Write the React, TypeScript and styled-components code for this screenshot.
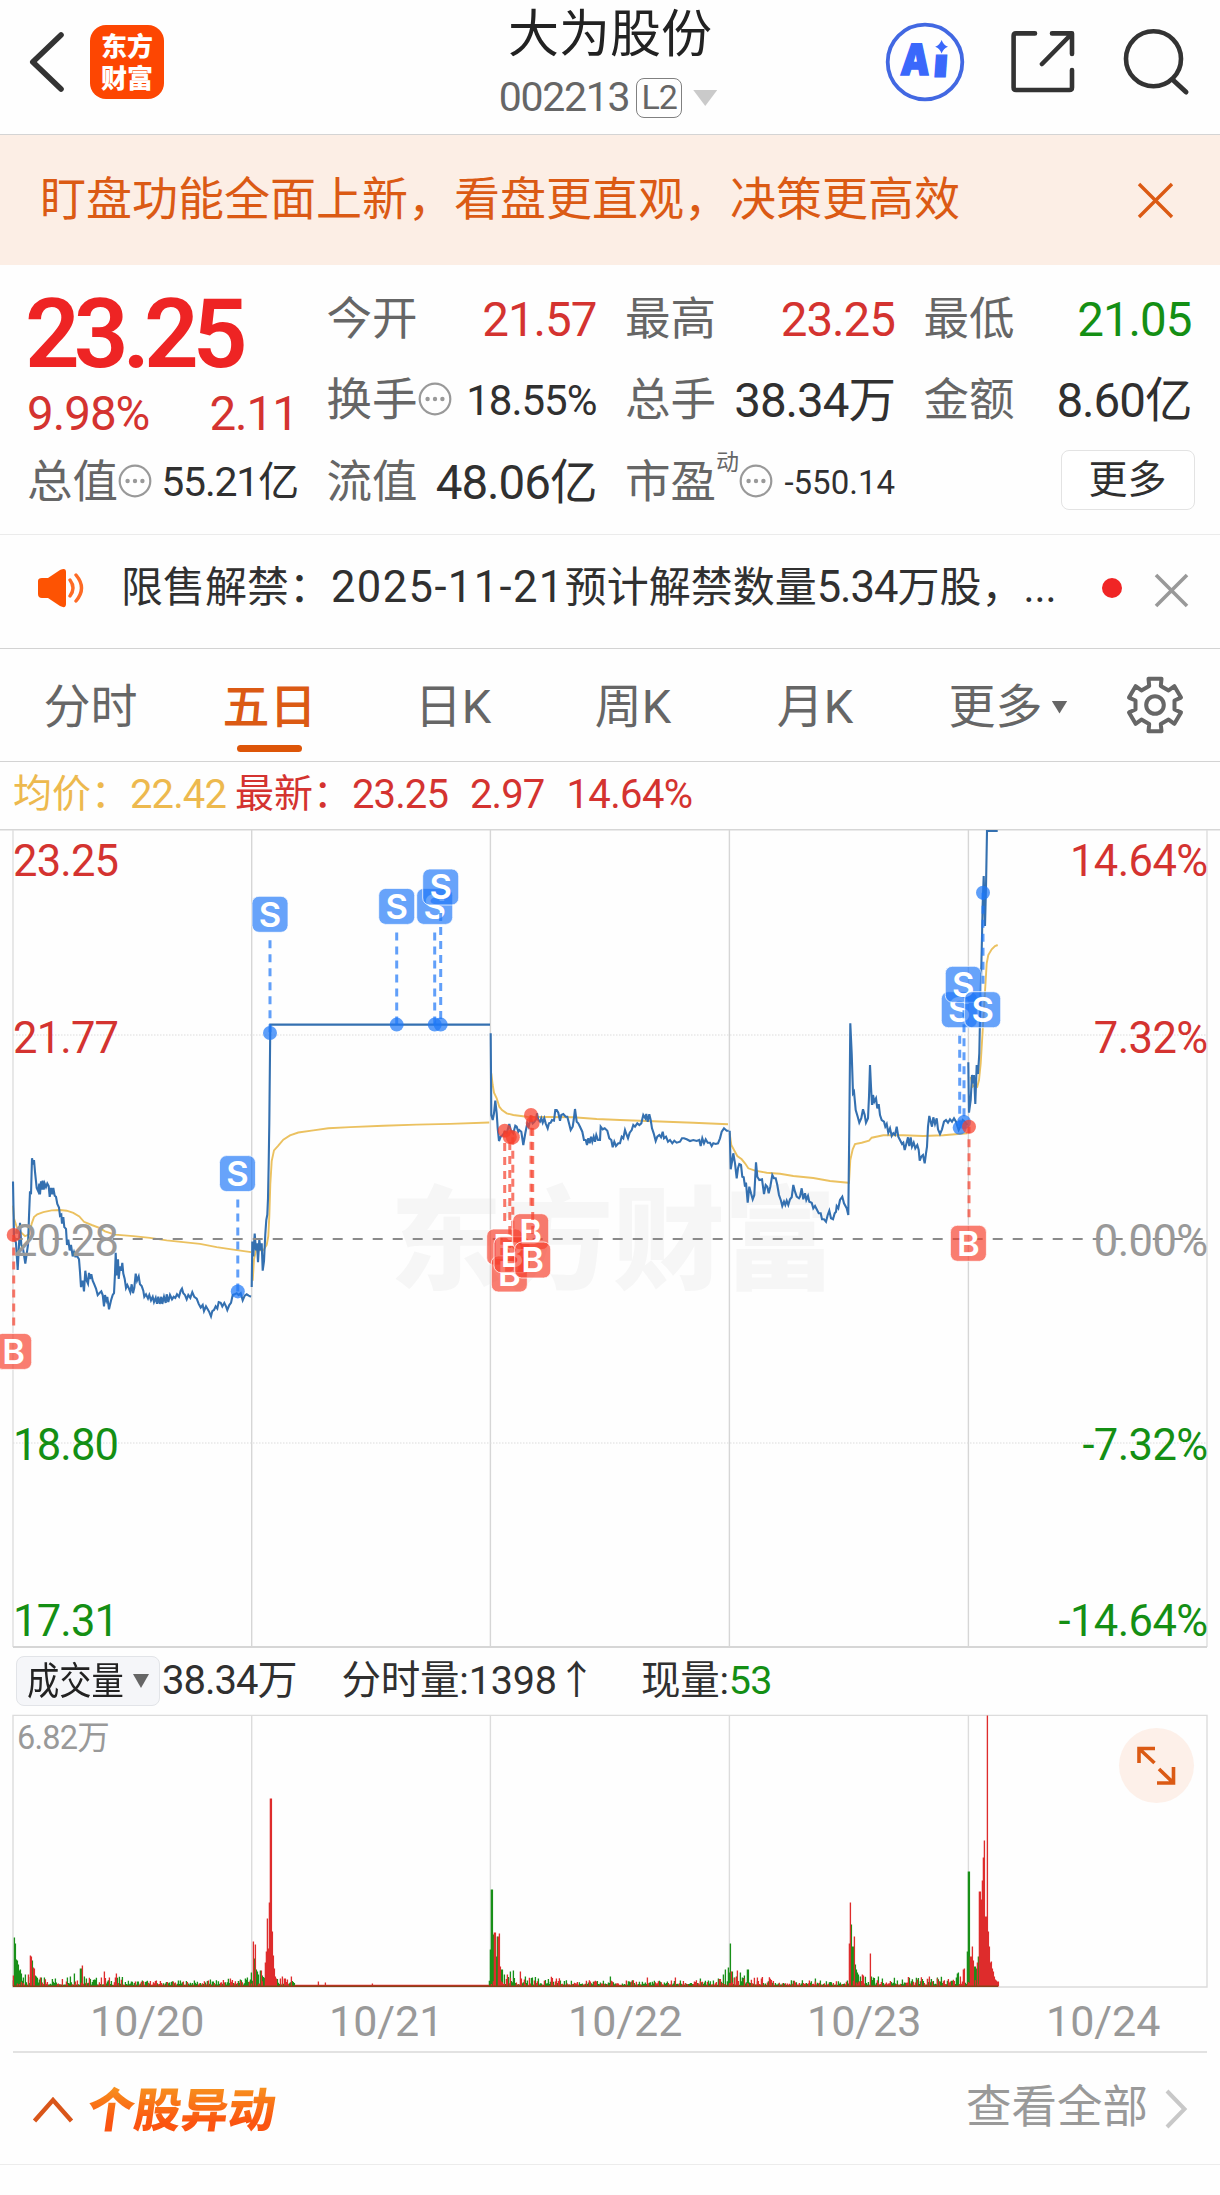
import React from "react";
import styled, { createGlobalStyle } from "styled-components";

const SANS = `Roboto, "Noto Sans CJK SC", sans-serif`;
const RED = "#d43330";
const GREEN = "#148f14";
const INK = "#303030";
const GREY = "#666666";
const PALE = "#999999";
const ORANGE = "#db5a14";

const GlobalStyle = createGlobalStyle`
  * { box-sizing: border-box; }
  body { margin: 0; background: #fff; font-family: ${SANS}; color: ${INK}; }
`;

const Page = styled.main`
  width: 1220px;
  height: 2195px;
  display: flex;
  flex-direction: column;
  background: #fefefe;
  overflow: hidden;
  white-space: nowrap;
  line-height: 1.2;
`;

const Num = styled.span<{ $size?: number; $color?: string; $ls?: number; $weight?: number }>`
  font-size: ${(p) => p.$size ?? 47.5}px;
  color: ${(p) => p.$color ?? INK};
  letter-spacing: ${(p) => p.$ls ?? -1}px;
  font-weight: ${(p) => p.$weight ?? 400};
`;

/* ---------- header ---------- */

const Header = styled.header`
  height: 135px;
  flex: none;
  display: grid;
  grid-template-columns: 420px 380px 420px;
  border-bottom: 1px solid #d4d4d4;
`;

const HeaderLeft = styled.div`
  display: flex;
  align-items: flex-start;
  gap: 24px;
  padding: 25px 0 0 28px;
  svg { margin-top: 6px; }
`;

const Logo = styled.div`
  width: 74px;
  height: 74px;
  border-radius: 16px;
  background: #fd4602;
  color: #fff;
  font: 900 26px/32px "Noto Sans CJK SC", sans-serif;
  text-align: center;
  padding-top: 4px;
`;

const HeaderTitle = styled.div`
  display: flex;
  flex-direction: column;
  align-items: center;
`;

const StockName = styled.h1`
  margin: 0;
  font-size: 51px;
  line-height: 70px;
  font-weight: 400;
  color: #222;
`;

const StockCode = styled.div`
  display: flex;
  align-items: center;
  height: 56px;
  margin-right: 4px;
`;

const LevelBadge = styled.span`
  width: 46px;
  height: 40px;
  margin: 0 11px 0 7px;
  border: 1.5px solid #808080;
  border-radius: 8px;
  color: ${GREY};
  font-size: 34px;
  line-height: 37px;
  letter-spacing: -1px;
  text-align: center;
`;

const Triangle = styled.i<{ $w: number; $h: number; $color: string }>`
  width: ${(p) => p.$w}px;
  height: ${(p) => p.$h}px;
  background: ${(p) => p.$color};
  clip-path: polygon(0 0, 100% 0, 50% 100%);
`;

const HeaderRight = styled.div`
  display: flex;
  align-items: flex-start;
  padding: 20px 0 0 83px;
`;

/* ---------- banner ---------- */

const Banner = styled.section`
  height: 130px;
  flex: none;
  display: flex;
  align-items: center;
  justify-content: space-between;
  padding: 0 46px 0 40px;
  background: #fceee5;
  color: ${ORANGE};
  font-size: 46px;
`;

/* ---------- quote ---------- */

const Quote = styled.section`
  height: 270px;
  flex: none;
  display: grid;
  grid-template-columns: 271px 270px 270px 268px;
  grid-template-rows: 81px 81px 82px;
  column-gap: 28.5px;
  padding: 15px 0 0 27px;
  border-bottom: 1.5px solid #ebebeb;
`;

const PriceCell = styled.div`
  grid-row: 1 / span 2;
  display: flex;
  flex-direction: column;
`;

const Price = styled.div`
  height: 106px;
  line-height: 108px;
  margin-left: -2px;
  font-size: 96px;
  font-weight: 600;
  letter-spacing: -6px;
  color: #ee2424;
`;

const Cell = styled.div`
  display: flex;
  align-items: center;
  justify-content: space-between;
`;

const Label = styled.span`
  display: flex;
  align-items: center;
  font-size: 45.5px;
  color: ${GREY};
`;

const Super = styled.sup`
  font-size: 23px;
  line-height: 24px;
  align-self: flex-start;
  margin: 0;
  transform: translateY(-5px);
`;

const MoreButton = styled.button`
  width: 134px;
  height: 60px;
  margin: 0 -3px 6px auto;
  padding: 0;
  border: 1.5px solid #e3e3e3;
  border-radius: 8px;
  background: #fff;
  color: ${INK};
  font: 400 39px/54px ${SANS};
`;

/* ---------- notice ---------- */

const Notice = styled.section`
  height: 114px;
  flex: none;
  display: flex;
  align-items: center;
  padding: 0 31px 8px 36px;
  border-bottom: 1.5px solid #d3d3d3;
  svg { flex: none; }
  svg:last-child { margin-top: 5px; }
`;

const NoticeText = styled.p`
  margin: 0 0 0 35px;
  width: 981px;
  font-size: 42px;
  line-height: 60px;
`;

const Dot = styled.i`
  width: 20px;
  height: 20px;
  margin: 0 32px 0 0;
  border-radius: 50%;
  background: #f02525;
`;

/* ---------- tabs ---------- */

const Tabs = styled.nav`
  height: 113px;
  flex: none;
  display: grid;
  grid-template-columns: 181px 177px 190px 170px 194px 192px 102px;
  border-bottom: 1.5px solid #d3d3d3;
`;

const Tab = styled.div<{ $active?: boolean }>`
  display: flex;
  flex-direction: column;
  align-items: center;
  font-size: 47px;
  line-height: 66px;
  padding-top: 25px;
  color: ${(p) => (p.$active ? ORANGE : GREY)};
  font-weight: ${(p) => (p.$active ? 500 : 400)};
  &::after {
    content: "";
    width: 65px;
    height: 7px;
    margin-top: 5px;
    border-radius: 4px;
    background: ${(p) => (p.$active ? "#dd5508" : "transparent")};
  }
`;

const TabLine = styled.span`
  display: flex;
  align-items: center;
  gap: 9px;
`;

/* ---------- legend and charts ---------- */

const Legend = styled.div`
  height: 67px;
  flex: none;
  display: flex;
  align-items: center;
  padding: 0 0 2px 13px;
  font-size: 39px;
`;

const Gap = styled.span<{ $w: number }>`
  width: ${(p) => p.$w}px;
`;

const Plot = styled.svg`
  display: block;
  flex: none;
`;

const VolumeBar = styled.div`
  height: 66px;
  flex: none;
  display: flex;
  align-items: center;
  padding-left: 16px;
  font-size: 39px;
`;

const Chip = styled.div`
  width: 144px;
  height: 50px;
  display: flex;
  align-items: center;
  gap: 9px;
  padding-left: 10px;
  border: 1.5px solid #e2e4e8;
  border-radius: 8px;
  background: #f5f6f9;
  color: #222;
`;

const ChipText = styled.span`
  width: 97px;
  font-size: 38px;
  line-height: 44px;
  transform: scaleX(0.85);
  transform-origin: left center;
`;

const VolumeWrap = styled.div`
  position: relative;
  flex: none;
  height: 275px;
`;

const Expand = styled.button`
  position: absolute;
  left: 1119px;
  top: 14px;
  width: 75px;
  height: 75px;
  padding: 0;
  border: 0;
  border-radius: 50%;
  background: #fdf0e9;
`;

const Dates = styled.div`
  height: 64px;
  flex: none;
  display: grid;
  grid-template-columns: repeat(5, 239px);
  margin: 0 13px;
  border-bottom: 2px solid #e2e2e2;
  span {
    padding-left: 77px;
    font-size: 43px;
    line-height: 64px;
    color: ${PALE};
  }
`;

const Footer = styled.footer`
  height: 112px;
  flex: none;
  display: flex;
  align-items: center;
  padding: 0 32px 0 32px;
  border-bottom: 1.5px solid #ececec;
`;

const FooterTitle = styled.h2`
  margin: -4px auto 0 14px;
  font: 900 47px/60px "Noto Sans CJK SC", sans-serif;
  background: linear-gradient(#f7931e 15%, #fb5410 75%);
  -webkit-background-clip: text;
  background-clip: text;
  color: transparent;
  transform: skewX(-8deg);
`;

const FooterLink = styled.span`
  font-size: 45.5px;
  color: ${PALE};
  margin-right: 16px;
`;

/* ---------- icons ---------- */

const MoreDots = () => (
  <svg width="34" height="34" viewBox="0 0 34 34" style={{ marginTop: -5 }}>
    <circle cx="17" cy="17" r="15.3" fill="none" stroke="#999" strokeWidth="2.2" />
    <circle cx="9.6" cy="17" r="2.2" fill="#999" />
    <circle cx="17" cy="17" r="2.2" fill="#999" />
    <circle cx="24.4" cy="17" r="2.2" fill="#999" />
  </svg>
);

const Cross = ({ size, color, width }: { size: number; color: string; width: number }) => (
  <svg width={size + 4} height={size + 4} viewBox={`-2 -2 ${size + 4} ${size + 4}`}>
    <path d={`M0 0L${size} ${size}M${size} 0L0 ${size}`} stroke={color} strokeWidth={width} fill="none" />
  </svg>
);

const gearPath = () => {
  const pts: string[] = [];
  for (let i = 0; i < 6; i++) {
    const a = -90 + i * 60;
    [[-17, 20], [-14, 27], [14, 27], [17, 20]].forEach(([d, r]) => {
      const t = ((a + d) * Math.PI) / 180;
      pts.push(`${(29 + r * Math.cos(t)).toFixed(1)} ${(29 + r * Math.sin(t)).toFixed(1)}`);
    });
  }
  return `M${pts.join("L")}Z`;
};

/* ---------- price series ---------- */

type Frame = { ox: number; oy: number; sx: number; sy: number };
const LEFT: Frame = { ox: 0, oy: 820, sx: 3, sy: 2.8 };
const MID: Frame = { ox: 480, oy: 960, sx: 3, sy: 3 };
const RIGHT: Frame = { ox: 820, oy: 820, sx: 3, sy: 3 };

const trace = (f: Frame, data: string) =>
  data
    .trim()
    .split(/\s+/)
    .map((p) => {
      const [x, y] = p.split(",").map(Number);
      return `${(f.ox + x / f.sx).toFixed(1)},${(f.oy + y / f.sy).toFixed(1)}`;
    })
    .join(" ");

const PRICE = [
  trace(LEFT, `39,1012 42,1165 48,1185 53,1260 57,1190 60,1128 64,1190 69,1200 76,1242 80,1215 84,1190 87,1110 90,1040 93,1048 96,947 100,965 102,952 105,985 110,1030 115,1040 118,1018 120,1048 123,1012 125,1035 128,1010 131,1035 134,1018 138,1028 142,1018 146,1025 149,1055 153,1030 157,1048 160,1030 164,1052 168,1055 172,1075 177,1085 180,1108 184,1105 186,1130 190,1112 193,1140 198,1145 201,1190 205,1175 209,1205 213,1190 218,1222 222,1210 226,1222 232,1222 237,1230 240,1265 243,1308 248,1290 252,1320 256,1262 260,1290 264,1298 267,1268 270,1285 274,1272 278,1290 283,1300 288,1312 293,1330 298,1325 304,1320 308,1330 312,1362 315,1330 319,1345 322,1335 327,1370 333,1345 338,1330 342,1325 345,1270 347,1212 350,1275 354,1230 356,1285 360,1250 364,1262 367,1240 370,1270 374,1285 378,1310 382,1302 386,1310 391,1322 395,1300 399,1325 403,1310 407,1270 411,1290 416,1278 420,1300 425,1305 430,1318 433,1335 438,1328 444,1340 448,1330 453,1345 458,1335 462,1350 467,1338 471,1355 475,1335 479,1355 484,1335 487,1355 492,1335 497,1352 500,1328 505,1350 510,1330 516,1342 521,1335 526,1338 531,1328 537,1335 542,1318 546,1312 550,1325 555,1330 560,1342 565,1330 571,1338 577,1322 583,1335 590,1340 596,1355 602,1365 608,1358 612,1375 618,1362 623,1370 628,1378 633,1390 637,1375 642,1372 647,1362 652,1368 656,1350 662,1352 667,1362 673,1352 678,1362 682,1372 688,1358 693,1352 698,1330 704,1328 710,1325 716,1330 722,1325 728,1345 734,1332 740,1328 746,1332 753,1335`),
  trace(LEFT, `755,1308 757,1180 760,1222 764,1158 768,1205 771,1185 774,1238 778,1175 782,1205 785,1185 788,1262 792,1235 796,1160 799,1120 802,1105 804,1060 806,960 808,850 811,573 1470,573`),
  trace(MID, `32,220 34,465 38,480 42,460 46,422 50,460 53,505 57,543 62,530 68,525 75,515 80,520 88,492 92,510 100,520 106,497 110,500 115,515 118,510 124,515 130,555 136,520 142,490 146,500 152,475 158,490 163,485 168,478 171,460 175,480 180,485 184,475 188,488 193,475 197,490 203,505 207,490 212,488 216,480 222,482 226,450 230,450 235,458 240,482 244,465 250,462 257,470 262,470 267,490 272,510 278,500 281,480 285,447 290,485 295,490 300,500 307,515 312,540 317,540 321,555 325,535 329,550 333,530 337,545 341,530 345,545 349,525 354,540 360,540 362,500 368,508 374,505 382,512 388,535 394,540 398,562 403,545 408,558 415,550 420,550 425,530 430,535 435,510 440,525 444,535 449,518 455,510 460,495 465,500 472,490 478,495 484,490 490,465 496,475 499,462 503,485 508,463 512,480 516,505 521,520 527,543 532,530 538,525 543,532 548,515 552,535 558,530 564,545 570,540 577,550 583,542 590,548 600,545 606,535 612,535 620,538 630,543 640,540 650,543 658,540 662,558 667,535 672,550 677,538 683,548 690,548 695,558 700,550 707,552 714,550 720,535 725,515 732,505 740,512 746,512`),
  trace(MID, `749,512 752,628 757,600 760,580 765,610 770,655 774,625 778,612 783,615 787,650 791,652 795,680 798,668 803,728 808,680 813,700 818,718 823,705 828,607 832,650 838,660 846,658 849,680 852,702 857,675 862,680 866,700 871,680 877,645 882,655 887,655 892,675 897,705 903,722 907,738 912,725 916,735 920,722 925,735 930,718 935,712 940,675 945,695 950,710 957,715 960,710 965,685 970,718 975,700 979,720 984,708 988,725 995,728 1000,745 1005,738 1010,748 1016,760 1022,760 1026,778 1032,778 1038,785 1043,765 1048,752 1053,775 1059,778 1064,760 1068,755 1070,738 1075,745 1080,720 1087,710 1092,730 1100,745 1105,765 1108,500 1111,190`) +
    " " +
    trace(RIGHT, `91,610 95,700 99,820 102,815 107,870 113,890 118,908 124,895 129,868 134,885 138,908 144,895 147,830 150,735 153,800 156,855 159,825 163,845 168,835 172,865 176,852 180,885 185,900 192,905 196,920 200,912 205,938 210,925 215,948 220,940 225,945 230,920 235,950 240,960 246,972 250,968 254,990 259,972 264,952 268,978 272,952 276,980 281,968 286,985 292,975 296,990 299,1022 304,1010 309,1005 314,1030 318,1000 321,980 324,920 328,888 332,905 336,920 340,892 345,912 350,895 354,928 360,942 366,928 372,905 378,900 384,908 390,898 396,905 402,895 408,905 412,918 416,930 421,920 428,900 435,905 442,915`),
  trace(RIGHT, `445,727 447,878 452,840 456,765 460,790 462,765 466,852 470,735 474,762 478,700 480,600 483,480 486,350 488,250 491,168 495,318 498,200 501,33 533,33`),
];

const AVERAGE = [
  trace(LEFT, `39,1080 42,1115 50,1140 60,1152 75,1165 88,1160 95,1130 102,1112 112,1104 130,1098 155,1093 180,1092 200,1094 220,1100 238,1110 252,1125 275,1134 300,1143 315,1152 345,1161 400,1165 450,1170 500,1177 550,1182 600,1187 650,1196 700,1203 753,1210`),
  trace(LEFT, `758,1290 762,1230 768,1205 790,1205 800,1190 805,1165 808,1110 811,1020 815,955 822,925 835,912 850,895 870,883 895,875 940,869 985,863 1050,860 1150,856 1250,853 1350,851 1468,847`),
  trace(MID, `34,340 38,375 42,398 50,415 58,440 66,450 80,460 100,465 140,470 200,471 280,472 350,477 420,480 520,484 640,488 744,493`),
  trace(MID, `749,520 754,555 762,570 772,588 785,598 795,610 805,625 825,632 860,638 900,641 940,648 1000,654 1050,663 1105,668`) +
    " " +
    trace(RIGHT, `87,1088 91,1020 98,988 105,972 125,968 147,962 155,953 190,946 250,946 310,948 370,946 442,940`),
  trace(RIGHT, `452,770 458,800 465,795 472,800 477,780 482,730 487,650 491,580 497,480 500,430 505,405 515,388 525,378 533,375`),
];

type Mark = { k: "S" | "B"; x: number; y: number; dx: number; dy: number };
const MARKS: Mark[] = [
  { k: "S", x: 270, y: 914.3, dx: 270, dy: 1033 },
  { k: "S", x: 396.7, y: 906.4, dx: 396.7, dy: 1024.6 },
  { k: "S", x: 434.7, y: 906.4, dx: 434.7, dy: 1024.6 },
  { k: "S", x: 440.7, y: 887, dx: 440.7, dy: 1024.6 },
  { k: "S", x: 237.5, y: 1173.6, dx: 237.8, dy: 1291.4 },
  { k: "B", x: 13.7, y: 1351.4, dx: 13.7, dy: 1235 },
  { k: "B", x: 504.7, y: 1247, dx: 504.7, dy: 1130.7 },
  { k: "B", x: 509.3, y: 1274, dx: 509.8, dy: 1137 },
  { k: "B", x: 512, y: 1254.7, dx: 512.8, dy: 1137.3 },
  { k: "B", x: 530.7, y: 1231.7, dx: 531, dy: 1115 },
  { k: "B", x: 532.7, y: 1260, dx: 532.7, dy: 1123 },
  { k: "S", x: 959.3, y: 1009.7, dx: 959.7, dy: 1127.7 },
  { k: "S", x: 963.3, y: 984.3, dx: 964, dy: 1122 },
  { k: "S", x: 982.7, y: 1009.7, dx: 983, dy: 892.7 },
  { k: "B", x: 968.4, y: 1243.3, dx: 969, dy: 1126.7 },
];

const Marker = ({ m }: { m: Mark }) => {
  const c = m.k === "S" ? "#1f78f7" : "#f6402c";
  const dir = m.dy > m.y ? 1 : -1;
  return (
    <g>
      <line x1={m.dx} y1={m.y + dir * 26} x2={m.dx} y2={m.dy} stroke={c} strokeWidth="3" strokeDasharray="8 6" opacity=".7" />
      <circle cx={m.dx} cy={m.dy} r="7" fill={c} opacity=".72" />
      <rect x={m.x - 18} y={m.y - 18} width="36" height="36" rx="7" fill={c} fillOpacity=".68" stroke="#fff" strokeOpacity=".75" strokeWidth="1" />
      <text x={m.x} y={m.y + 12.4} fontFamily="Inter, sans-serif" fontSize="34.5" fontWeight="600" fill="#fff" textAnchor="middle">
        {m.k}
      </text>
    </g>
  );
};

const GRID_X = [251.7, 490.4, 729.4, 968.4];

const AXIS: [string, string, number, string][] = [
  ["23.25", "14.64%", 876, RED],
  ["21.77", "7.32%", 1052.5, RED],
  ["20.28", "0.00%", 1256, PALE],
  ["18.80", "-7.32%", 1460, GREEN],
  ["17.31", "-14.64%", 1636, GREEN],
];

const PriceChart = () => (
  <Plot width="1220" height="819" viewBox="0 829 1220 819">
    <text x="390" y="1281" fontFamily="Noto Sans CJK SC" fontWeight="900" fontSize="112" textLength="446" fill="#f6f6f6">
      东方财富
    </text>
    <g stroke="#d6d6d6" strokeWidth="1.4" fill="none">
      <path d="M0 829.7H1220" />
      <path d="M13 830V1647M1207 830V1647" stroke="#dedede" />
      {GRID_X.map((x) => (
        <path key={x} d={`M${x} 830V1647`} />
      ))}
      <path d="M13 1647H1207" strokeWidth="2" />
      <path d="M13 1035H1207M13 1443H1207" stroke="#dcdcdc" strokeWidth="1" strokeDasharray="1.5 1.5" />
    </g>
    {AVERAGE.map((p, i) => (
      <polyline key={i} points={p} fill="none" stroke="#ebc160" strokeWidth="1.9" />
    ))}
    {PRICE.map((p, i) => (
      <polyline key={i} points={p} fill="none" stroke="#3470b0" strokeWidth="2.1" />
    ))}
    <path d="M12.7 1239H1207" stroke="#8a8a8a" strokeWidth="1.8" strokeDasharray="10 10" />
    {AXIS.map(([l, r, y, c]) => (
      <g key={l} fontFamily={SANS} fontSize="43.5" fill={c}>
        <text x="13" y={y} letterSpacing="-.8">{l}</text>
        <text x="1207.5" y={y} letterSpacing="-.6" textAnchor="end">{r}</text>
      </g>
    ))}
    {MARKS.map((m, i) => (
      <Marker key={i} m={m} />
    ))}
  </Plot>
);

/* ---------- volume series ---------- */

type Peak = [number, number, "r" | "g"];
const PEAKS: Peak[] = [
  [13, 11, "r"], [14, 49, "g"], [15, 43, "g"], [16, 27, "g"], [17, 26, "g"], [18, 22, "g"], [19, 16, "g"], [20, 17, "g"], [21, 13, "g"], [23, 9, "g"], [25, 12, "g"],
  [28, 12, "r"], [30, 31, "r"], [31, 30, "r"], [32, 26, "g"], [33, 19, "r"], [34, 18, "r"], [35, 11, "g"], [36, 10, "g"], [40, 9, "r"], [44, 9, "g"],
  [67, 9, "g"], [70, 10, "g"], [74, 13, "g"], [80, 18, "g"], [81, 18, "g"], [82, 21, "r"], [84, 10, "g"], [86, 8, "g"], [104, 15, "r"], [116, 13, "r"], [115, 9, "r"],
  [142, 6, "g"], [210, 7, "g"], [240, 7, "g"], [245, 8, "g"], [251, 14, "g"], [253, 45, "r"], [254, 28, "g"], [255, 42, "r"], [256, 17, "g"], [257, 15, "g"], [258, 12, "g"], [260, 16, "g"], [261, 16, "r"], [262, 11, "g"], [263, 9, "g"],
  [265, 24, "r"], [266, 35, "r"], [267, 68, "r"], [268, 38, "r"], [269, 84, "r"], [270, 188, "r"], [271, 188, "r"], [272, 55, "r"], [273, 31, "r"], [274, 18, "r"], [275, 10, "r"], [276, 8, "r"], [280, 8, "r"], [282, 10, "r"], [284, 8, "r"], [287, 7, "r"], [291, 10, "r"],
  [318, 5, "r"], [325, 4, "r"], [372, 3, "r"],
  [490, 37, "g"], [491, 97, "g"], [492, 97, "g"], [493, 52, "g"], [494, 54, "r"], [495, 54, "r"], [496, 30, "g"], [497, 50, "g"], [498, 50, "r"], [499, 53, "r"], [500, 20, "r"], [501, 17, "g"], [502, 17, "g"], [504, 12, "g"], [507, 12, "r"], [510, 15, "g"], [513, 16, "g"], [520, 15, "r"], [525, 10, "g"], [532, 9, "g"], [538, 8, "g"], [556, 8, "r"],
  [610, 10, "g"], [647, 9, "r"], [675, 9, "r"], [700, 8, "g"],
  [723, 12, "g"], [725, 17, "g"], [728, 19, "g"], [729, 14, "g"], [730, 43, "g"], [731, 15, "r"], [732, 15, "g"], [734, 9, "r"], [736, 10, "g"], [737, 16, "r"], [740, 14, "g"], [742, 9, "g"], [744, 11, "g"], [747, 17, "g"], [748, 17, "g"], [757, 9, "r"], [815, 8, "g"],
  [849, 43, "r"], [850, 84, "r"], [851, 62, "g"], [852, 40, "g"], [853, 40, "g"], [854, 50, "r"], [855, 22, "g"], [856, 17, "g"], [857, 14, "g"], [858, 12, "g"], [860, 10, "g"], [862, 12, "r"], [863, 11, "r"], [870, 33, "r"], [871, 10, "g"], [873, 9, "g"], [878, 10, "g"], [882, 8, "g"], [929, 10, "r"], [937, 9, "g"],
  [957, 13, "g"], [958, 14, "g"], [960, 10, "r"], [963, 17, "r"], [964, 18, "r"], [967, 35, "g"], [968, 115, "g"], [969, 115, "g"], [970, 30, "r"], [971, 30, "r"], [972, 40, "r"], [973, 26, "r"], [974, 20, "g"], [975, 20, "g"], [976, 18, "g"], [977, 24, "r"], [978, 30, "g"],
  [979, 95, "r"], [980, 95, "r"], [981, 87, "r"], [982, 106, "r"], [983, 129, "r"], [984, 146, "r"], [985, 70, "r"], [986, 70, "r"], [987, 271, "r"], [988, 55, "r"], [989, 40, "r"], [990, 24, "r"], [991, 25, "r"], [992, 18, "r"], [993, 15, "r"], [994, 10, "r"], [995, 7, "r"], [996, 6, "r"], [997, 5, "r"], [998, 5, "r"],
];

const hash = (n: number) => {
  const v = Math.sin(n * 12.9898) * 43758.5453;
  return v - Math.floor(v);
};

const noise = (): Peak[] => {
  const out: Peak[] = [];
  for (let x = 13; x < 998; x++) {
    const quiet = x > 294 && x < 489;
    const active = (x < 125 && x > 20) || (x > 220 && x < 290) || (x > 489 && x < 560) || (x > 715 && x < 775) || (x > 850 && x < 965);
    const cap = quiet ? 0 : active ? 8 : 4.5;
    const h = 1.8 + cap * Math.pow(hash(x), 1.7);
    out.push([x, h, quiet || hash(x + 7000) > 0.54 ? "r" : "g"]);
  }
  return out;
};

const bars = (side: "r" | "g") =>
  [...noise(), ...PEAKS]
    .filter((b) => b[2] === side)
    .map(([x, h]) => `M${x + 0.4} 1986.5v${-h.toFixed(1)}`)
    .join("");

const VolumeChart = () => (
  <Plot width="1220" height="275" viewBox="0 1714 1220 275">
    <g stroke="#dcdcdc" strokeWidth="1.4" fill="none">
      <path d="M13 1715.4H1207V1987H13Z" />
      {GRID_X.map((x) => (
        <path key={x} d={`M${x} 1715V1987`} />
      ))}
    </g>
    <path d={bars("g")} stroke="#189018" strokeWidth="1.35" />
    <path d={bars("r")} stroke="#de2c2c" strokeWidth="1.35" />
    <path d="M13 1986.2H998" stroke="#8a4018" strokeWidth="1.4" />
    <text x="17" y="1748.5" fontFamily={SANS} fontSize="32.5" fill={PALE} letterSpacing="-.8">
      6.82万
    </text>
  </Plot>
);

export default function App() {
  return (
    <Page>
      <GlobalStyle />
      <Header>
        <HeaderLeft>
          <svg width="38" height="62" viewBox="0 0 38 62" fill="none">
            <path d="M33 4L4.8 31L33 58" stroke="#333" strokeWidth="5.6" strokeLinecap="round" strokeLinejoin="round" />
          </svg>
          <Logo>东方<br />财富</Logo>
        </HeaderLeft>
        <HeaderTitle>
          <StockName>大为股份</StockName>
          <StockCode>
            <Num $size={41} $color={GREY} $ls={-1.3}>002213</Num>
            <LevelBadge>L2</LevelBadge>
            <Triangle $w={24} $h={16} $color="#cacaca" />
          </StockCode>
        </HeaderTitle>
        <HeaderRight>
          <svg width="84" height="84" viewBox="0 0 84 84">
            <circle cx="42" cy="42" r="37.3" fill="none" stroke="#4268e2" strokeWidth="3.8" />
            <g fill="#3a68fb" stroke="#3a68fb" fontFamily="Inter, sans-serif" fontWeight="900" transform="skewX(-4)">
              <text x="21" y="55.5" fontSize="43" strokeWidth="1.6" textLength="29" lengthAdjust="spacingAndGlyphs">A</text>
              <text x="53.5" y="57.5" fontSize="40" strokeWidth="1.2" textLength="15" lengthAdjust="spacingAndGlyphs">ı</text>
            </g>
            <path d="M58.6 20Q60.4 25 65 26.7Q60.4 28.4 58.6 33.4Q56.8 28.4 52.2 26.7Q56.8 25 58.6 20Z" fill="#3a68fb" />
          </svg>
          <svg width="66" height="66" viewBox="0 0 66 66" fill="none" stroke="#333" strokeWidth="4.6" strokeLinecap="round" strokeLinejoin="round" style={{ margin: "9px 0 0 42px" }}>
            <path d="M26 4.4H7Q4.6 4.4 4.6 7V58.6Q4.6 61 7 61H60.5Q63 61 63 58.6V41M43 4.4H63V25M62 5.5L33 35" />
          </svg>
          <svg width="70" height="70" viewBox="0 0 70 70" fill="none" stroke="#333" strokeWidth="4.6" strokeLinecap="round" style={{ margin: "6px 0 0 47px" }}>
            <circle cx="31.5" cy="32.7" r="27.5" />
            <path d="M51 54L64 66" strokeWidth="5" />
          </svg>
        </HeaderRight>
      </Header>

      <Banner>
        <span>盯盘功能全面上新，看盘更直观，决策更高效</span>
        <Cross size={33} color={ORANGE} width={3.4} />
      </Banner>

      <Quote>
        <PriceCell>
          <Price>23.25</Price>
          <Cell>
            <Num $color={RED}>9.98%</Num>
            <Num $color={RED}>2.11</Num>
          </Cell>
        </PriceCell>
        <Cell><Label>今开</Label><Num $color={RED}>21.57</Num></Cell>
        <Cell><Label>最高</Label><Num $color={RED}>23.25</Num></Cell>
        <Cell><Label>最低</Label><Num $color={GREEN}>21.05</Num></Cell>
        <Cell><Label>换手<MoreDots /></Label><Num $size={42}>18.55%</Num></Cell>
        <Cell><Label>总手</Label><Num>38.34万</Num></Cell>
        <Cell><Label>金额</Label><Num>8.60亿</Num></Cell>
        <Cell><Label>总值<MoreDots /></Label><Num $size={41} $ls={-1.2}>55.21亿</Num></Cell>
        <Cell><Label>流值</Label><Num>48.06亿</Num></Cell>
        <Cell><Label>市盈<Super>动</Super><MoreDots /></Label><Num $size={33} $ls={0}>-550.14</Num></Cell>
        <Cell><MoreButton>更多</MoreButton></Cell>
      </Quote>

      <Notice>
        <svg width="50" height="42" viewBox="0 0 50 42">
          <path d="M2 14Q2 11 6 11H12L24 3Q30 0 30 5V37Q30 42 24 39L12 31H6Q2 31 2 27Z" fill="#fd5303" />
          <path d="M34 13Q40 21 34 29M40 8Q51 21 40 34" fill="none" stroke="#fd6a25" strokeWidth="3.4" strokeLinecap="round" />
        </svg>
        <NoticeText>
          限售解禁：<Num $size={43.5} $ls={1.4}>2025-11-21</Num>预计解禁数量<Num $size={43.5}>5.34</Num>万股，...
        </NoticeText>
        <Dot />
        <Cross size={31} color="#999" width={3.6} />
      </Notice>

      <Tabs>
        <Tab>分时</Tab>
        <Tab $active>五日</Tab>
        <Tab>日K</Tab>
        <Tab>周K</Tab>
        <Tab>月K</Tab>
        <Tab><TabLine>更多<Triangle $w={16} $h={13} $color={GREY} /></TabLine></Tab>
        <Tab>
          <svg width="58" height="58" viewBox="0 0 58 58" fill="none" stroke={GREY} strokeWidth="4" style={{ marginTop: 2 }}>
            <path d={gearPath()} strokeLinejoin="round" />
            <circle cx="29" cy="29" r="8.8" />
          </svg>
        </Tab>
      </Tabs>

      <Legend>
        <Num $size={39} $color="#edb94e" $ls={0}>均价：</Num>
        <Num $size={40} $color="#edb94e" $ls={-0.9}>22.42</Num>
        <Gap $w={9} />
        <Num $size={39} $color={RED} $ls={0}>最新：</Num>
        <Num $size={40} $color={RED} $ls={-0.9}>23.25</Num>
        <Gap $w={22} />
        <Num $size={40} $color={RED} $ls={-0.9}>2.97</Num>
        <Gap $w={22} />
        <Num $size={40} $color={RED} $ls={-0.6}>14.64%</Num>
      </Legend>

      <PriceChart />

      <VolumeBar>
        <Chip>
          <ChipText>成交量</ChipText>
          <Triangle $w={16} $h={14} $color={GREY} />
        </Chip>
        <Gap $w={2} />
        <Num $size={40}>38.34万</Num>
        <Gap $w={45} />
        <Num $size={39.5} $ls={-0.2}>分时量:1398↑</Num>
        <Gap $w={45} />
        <Num $size={39.5} $ls={-0.3}>现量:</Num>
        <Num $size={39.5} $ls={-0.6} $color={GREEN}>53</Num>
      </VolumeBar>

      <VolumeWrap>
        <VolumeChart />
        <Expand>
          <svg width="75" height="75" viewBox="0 0 75 75" fill="none" stroke={ORANGE} strokeWidth="3.6" style={{ display: "block" }}>
            <path d="M20 35V20.5H36M20.5 21L35.5 35M38 55H54.5V39M54 54.5L40 41" />
          </svg>
        </Expand>
      </VolumeWrap>

      <Dates>
        <span>10/20</span>
        <span>10/21</span>
        <span>10/22</span>
        <span>10/23</span>
        <span>10/24</span>
      </Dates>

      <Footer>
        <svg width="42" height="30" viewBox="0 0 42 30" fill="none">
          <path d="M2.5 27L21 6L39.5 27" stroke="#d9561a" strokeWidth="4.4" />
        </svg>
        <FooterTitle>个股异动</FooterTitle>
        <FooterLink>查看全部</FooterLink>
        <svg width="24" height="42" viewBox="0 0 24 42" fill="none">
          <path d="M3 3L20.5 21L3 39" stroke="#c8c8c8" strokeWidth="4" />
        </svg>
      </Footer>
    </Page>
  );
}
